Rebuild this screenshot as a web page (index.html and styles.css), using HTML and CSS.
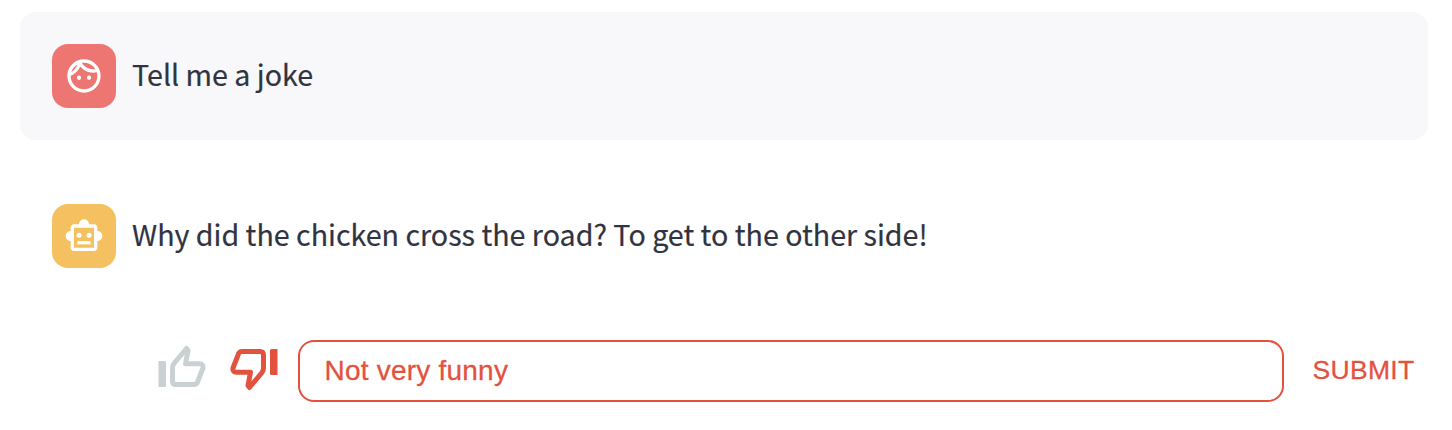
FILE: index.html
```html
<!DOCTYPE html>
<html lang="en">
<head>
<meta charset="utf-8">
<title>Chat</title>
<link rel="stylesheet" href="styles.css">
</head>
<body>
<main class="chat">
  <section class="message message-user">
    <div class="avatar avatar-user">
      <svg class="avatar-icon" viewBox="0 0 24 24"><path d="M10.25 13c0 .69-.56 1.25-1.25 1.25S7.75 13.69 7.75 13s.56-1.25 1.25-1.25 1.25.56 1.25 1.25zM15 11.75c-.69 0-1.25.56-1.25 1.25s.56 1.25 1.25 1.25 1.25-.56 1.25-1.25-.56-1.25-1.25-1.25zm7 .25c0 5.52-4.48 10-10 10S2 17.52 2 12 6.48 2 12 2s10 4.48 10 10zM10.66 4.12C12.06 6.44 14.6 8 17.5 8c.46 0 .91-.05 1.34-.12C17.44 5.56 14.9 4 12 4c-.46 0-.91.05-1.34.12zM4.42 9.47c1.71-.97 3.03-2.55 3.66-4.44C6.37 6 5.05 7.58 4.42 9.47zM20 12c0-.78-.12-1.53-.33-2.24-.7.15-1.42.24-2.17.24-3.13 0-5.92-1.44-7.76-3.69C8.69 8.87 6.6 10.88 4 11.86c.01.04 0 .09 0 .14 0 4.41 3.59 8 8 8s8-3.59 8-8z"/></svg>
    </div>
    <p class="text">Tell me a joke</p>
  </section>
  <section class="message">
    <div class="avatar avatar-bot">
      <svg class="avatar-icon" viewBox="0 0 24 24"><path d="M20 9V7c0-1.100-.9-2-2-2h-3c0-1.660-1.340-3-3-3S9 3.340 9 5H6c-1.100 0-2 .9-2 2v2c-1.660 0-3 1.340-3 3s1.340 3 3 3v4c0 1.100.9 2 2 2h12c1.100 0 2-.9 2-2v-4c1.660 0 3-1.340 3-3s-1.340-3-3-3zm-2 10H6V7h12v12z"/><circle cx="9" cy="11.500" r="1.500"/><circle cx="15" cy="11.500" r="1.500"/><path d="M8 15h8v2H8z"/></svg>
    </div>
    <p class="text">Why did the chicken cross the road? To get to the other side!</p>
  </section>
  <form class="feedback">
    <svg class="thumb thumb-up" viewBox="0 0 48 44"><path class="bar" d="M.5 17H6.500Q8 17 8 18.500V41.500Q8 43 6.500 43H.5Z"/><path class="hand" d="M14.500 24Q14.500 21.500 16 19.500L28.500 4.500 30 6.500 27.500 19.700H41.500Q45.500 19.700 45 24L39.500 38.200Q38.500 40.500 36 40.500H18Q14.500 40.500 14.500 37Z"/></svg>
    <svg class="thumb thumb-down" viewBox="0 0 48 44"><path class="bar" d="M.5 17H6.500Q8 17 8 18.500V41.500Q8 43 6.500 43H.5Z"/><path class="hand" d="M14.500 24Q14.500 21.500 16 19.500L28.500 4.500 30 6.500 27.500 19.700H41.500Q45.500 19.700 45 24L39.500 38.200Q38.500 40.500 36 40.500H18Q14.500 40.500 14.500 37Z"/></svg>
    <div class="field">Not very funny</div>
    <div class="submit">SUBMIT</div>
  </form>
</main>
</body>
</html>
```

FILE: styles.css
```css
body {
  margin: 0;
  background: #fff;
  font-family: "Liberation Sans", Arial, sans-serif;
}
.chat {
  display: flex;
  flex-direction: column;
  gap: 32px;
  padding: 12px 24px 0 20px;
}
.message {
  display: flex;
  align-items: center;
  gap: 16px;
  height: 64px;
  padding: 32px;
  border-radius: 16px;
}
.message-user {
  background: #f8f8fb;
}
.avatar {
  display: grid;
  place-items: center;
  width: 64px;
  height: 64px;
  border-radius: 16px;
}
.avatar-user {
  background: #ed7672;
}
.avatar-bot {
  background: #f5c05f;
}
.avatar-icon {
  width: 40px;
  height: 40px;
  fill: #fff;
}
.text {
  margin: 0 0 4px;
  color: #31333f;
  font: 28.640px/48px "Noto Sans CJK SC", sans-serif;
  white-space: nowrap;
  -webkit-text-stroke: .2px #31333f;
}
.feedback {
  display: flex;
  align-items: center;
  height: 62px;
  margin-top: 8px;
  padding-left: 138px;
}
.thumb {
  width: 48px;
  height: 44px;
  flex: none;
}
.thumb .bar {
  fill: currentColor;
}
.thumb .hand {
  fill: none;
  stroke: currentColor;
  stroke-width: 5;
  stroke-linejoin: round;
}
.thumb-up {
  color: #c9d1d3;
  margin-top: -10px;
}
.thumb-down {
  color: #e3523f;
  margin: -2px 20px 0 24px;
  transform: rotate(180deg);
}
.field {
  flex: none;
  box-sizing: border-box;
  width: 986px;
  height: 62px;
  padding-left: 24.500px;
  border: 2px solid #e3523f;
  border-radius: 16px;
  color: #e3523f;
  font-size: 28px;
  letter-spacing: .22px;
  line-height: 57px;
  -webkit-text-stroke: .3px #e3523f;
}
.submit {
  margin: 0 0 2px 28.500px;
  color: #e3523f;
  font-size: 26.500px;
  letter-spacing: .3px;
  line-height: 60px;
  -webkit-text-stroke: .3px #e3523f;
}
```
